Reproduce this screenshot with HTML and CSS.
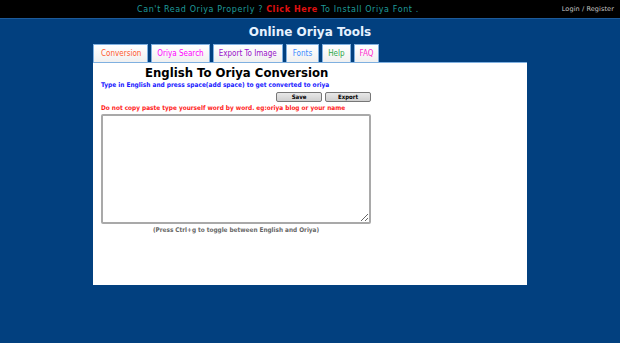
FILE: index.html
```html
<!DOCTYPE html>
<html lang="en">
<head>
    <meta charset="UTF-8">
    <title>Online Oriya Tools</title>
    <link rel="stylesheet" href="styles.css">
</head>
<body>
    <!-- Top Bar -->
    <div class="topbar">
        <p class="notice">Can't Read Oriya Properly ? <a href="#" class="install">Click Here</a> To Install Oriya Font .</p>
        <a href="#" class="login">Login / Register</a>
    </div>

    <header>
        <h1>Online Oriya Tools</h1>
    </header>

    <div class="wrap">
        <!-- Tabs -->
        <ul class="tabs">
            <li class="tab tab-conversion">Conversion</li>
            <li class="tab tab-search">Oriya Search</li>
            <li class="tab tab-export">Export To Image</li>
            <li class="tab tab-fonts">Fonts</li>
            <li class="tab tab-help">Help</li>
            <li class="tab tab-faq">FAQ</li>
        </ul>

        <!-- Conversion Panel -->
        <div class="panel">
            <h2>English To Oriya Conversion</h2>
            <div class="editor">
                <p class="hint-blue">Type in English and press space(add space) to get converted to oriya</p>
                <div class="actions">
                    <button class="btn">Save</button>
                    <button class="btn">Export</button>
                </div>
                <p class="hint-red">Do not copy paste type yourself word by word. eg:oriya blog or your name</p>
                <textarea class="input-box"></textarea>
                <p class="hint-gray">(Press Ctrl+g to toggle between English and Oriya)</p>
            </div>
        </div>
    </div>
</body>
</html>
```

FILE: styles.css
```css
/* Global */
body {
    margin: 0;
    padding: 0;
    background-color: #02407f;
    font-family: "DejaVu Sans Condensed", "DejaVu Sans", sans-serif;
    height: 343px;
    overflow: hidden;
}

/* Top Bar */
.topbar {
    height: 18px;
    background-color: #000;
    border-bottom: 1px solid #1d5a99;
    display: flex;
    align-items: center;
}

.notice {
    margin: 0 0 0 137px;
    font-family: "DejaVu Sans", sans-serif;
    font-size: 8px;
    letter-spacing: 0.6px;
    color: #1f9a9a;
}

.notice .install {
    color: #e01010;
    font-weight: bold;
    text-decoration: none;
}

.login {
    margin-left: auto;
    margin-right: 6px;
    font-family: "DejaVu Sans", sans-serif;
    font-size: 6.5px;
    letter-spacing: 0.1px;
    color: #c8c8c8;
    text-decoration: none;
}

/* Header */
header h1 {
    margin: 6px 0 5px;
    text-align: center;
    font-family: "DejaVu Sans", sans-serif;
    font-size: 12px;
    color: #e6f2ff;
    line-height: 14px;
}

/* Tabs */
.wrap {
    width: 434px;
    margin: 0 auto;
}

.tabs {
    list-style: none;
    margin: 0;
    padding: 0;
    display: flex;
    gap: 3px;
}

.tab {
    height: 17px;
    padding: 0 5px;
    line-height: 17px;
    font-size: 8px;
    background: linear-gradient(#ffffff, #f0f0f0);
    border: 1px solid #7fb0e0;
    border-bottom: none;
}

.tab-conversion { color: #ff5a2e; padding: 0 6px 0 7px; }
.tab-search { color: #ff00ff; }
.tab-export { color: #9a13c9; }
.tab-fonts { color: #3a8cff; padding: 0 6px; }
.tab-help { color: #2ea84a; }
.tab-faq { color: #ff2ccf; }

/* Panel */
.panel {
    background-color: #fff;
    border-top: 1px solid #7fb0e0;
    height: 223px;
    padding-top: 2px;
    box-sizing: border-box;
}

.panel h2 {
    margin: 0 0 0 52px;
    font-family: "DejaVu Sans", sans-serif;
    font-size: 11.7px;
    line-height: 16px;
    color: #000;
}

.editor {
    width: 270px;
    margin-left: 8px;
}

.hint-blue {
    margin: 0;
    font-size: 6.5px;
    font-weight: bold;
    color: #1a1aff;
    line-height: 9px;
}

.actions {
    display: flex;
    justify-content: flex-end;
    gap: 3px;
    margin-top: 2px;
}

.btn {
    width: 46px;
    height: 10px;
    padding: 0;
    font-family: "DejaVu Sans Condensed", sans-serif;
    font-size: 6px;
    font-weight: bold;
    line-height: 8px;
    color: #000;
    background: linear-gradient(#e8e8e8, #cfcfcf);
    border: 1px solid #777;
    border-radius: 2px;
}

.hint-red {
    margin: 2px 0 0;
    font-size: 6.45px;
    font-weight: bold;
    color: #ff1a1a;
    line-height: 9px;
}

.input-box {
    display: block;
    width: 270px;
    height: 110px;
    margin-top: 1px;
    box-sizing: border-box;
    border: 2px solid #a9a9a9;
    border-radius: 2px;
    resize: vertical;
}

.hint-gray {
    margin: 2px 0 0;
    text-align: center;
    font-size: 6.4px;
    font-weight: bold;
    color: #666;
    line-height: 9px;
}
```
